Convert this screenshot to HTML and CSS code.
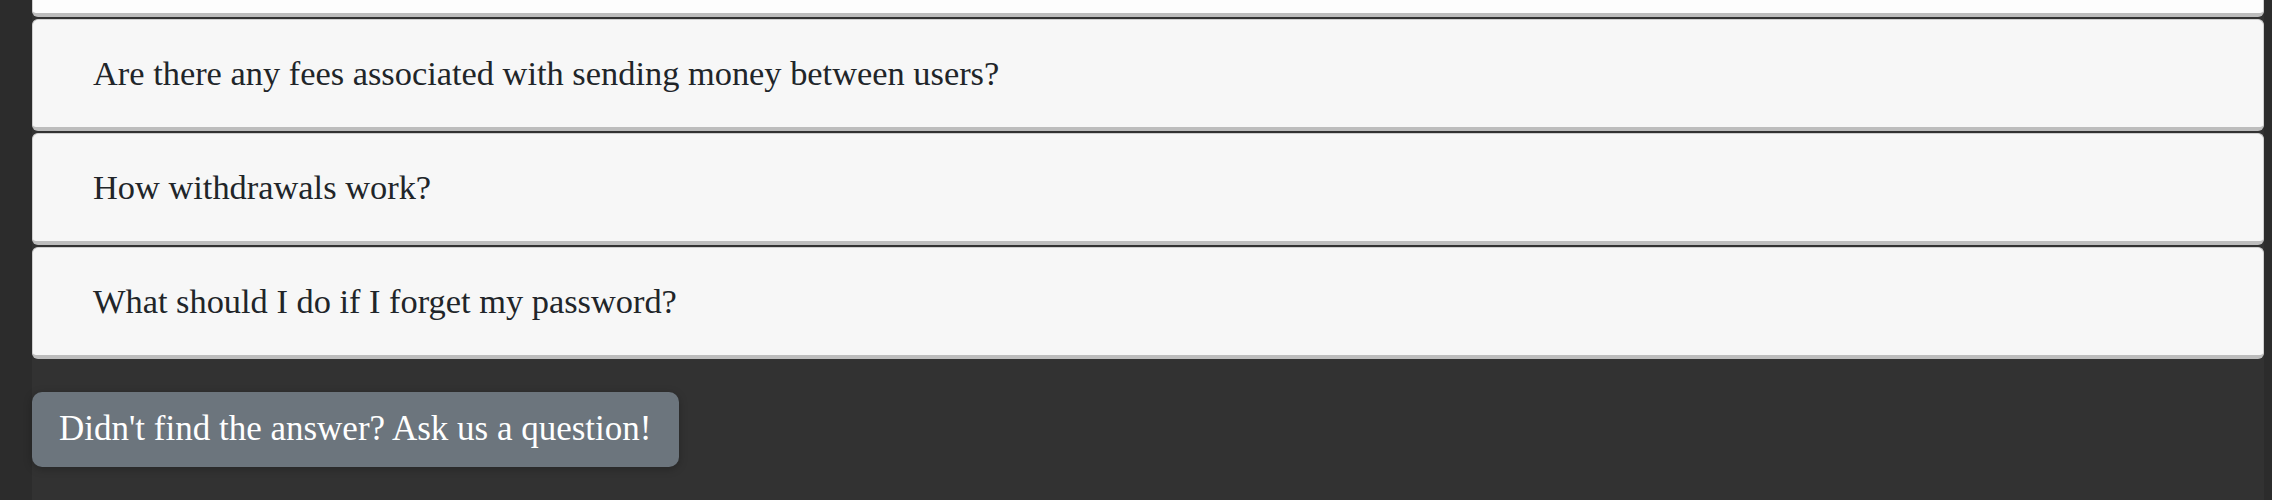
FILE: index.html
```html
<!DOCTYPE html>
<html lang="en">
<head>
<meta charset="utf-8">
<title>FAQ</title>
<link rel="stylesheet" href="styles.css">
</head>
<body>
<main class="page">
  <section class="faq">
    <div class="faq-item faq-item--open" aria-hidden="true"></div>
    <div class="faq-item">Are there any fees associated with sending money between users?</div>
    <div class="faq-item">How withdrawals work?</div>
    <div class="faq-item">What should I do if I forget my password?</div>
  </section>
  <button class="ask-btn" type="button">Didn't find the answer? Ask us a question!</button>
</main>
</body>
</html>
```
FILE: styles.css
```css
html, body {
  margin: 0;
  padding: 0;
}
body {
  background: #2c2c2c;
  font-family: "Liberation Serif", "Times New Roman", serif;
  overflow: hidden;
}
.page {
  margin: 0 8px 0 32px;
  background: #323232;
  min-height: 100vh;
  display: flex;
  flex-direction: column;
  align-items: flex-start;
}
.faq {
  align-self: stretch;
  display: flex;
  flex-direction: column;
  gap: 2px;
  margin-top: -95px;
}
.faq-item {
  background: #f7f7f7;
  color: #212529;
  border: 1px solid #cfcfcf;
  border-bottom: 4px solid #bdbdbd;
  border-radius: 6px;
  padding: 33px 60px 34px;
  font-size: 34.4px;
  line-height: 40px;
  min-height: 40px;
}
.faq-item--open {
  background: #fdfdfd;
}
.ask-btn {
  margin-top: 33px;
  background: #6c757d;
  color: #ffffff;
  border: none;
  border-radius: 10px;
  padding: 17px 28px 18px 27px;
  font-family: "Liberation Serif", "Times New Roman", serif;
  font-size: 35px;
  line-height: 40px;
  box-shadow: 0 2px 8px rgba(0, 0, 0, 0.25);
  cursor: pointer;
}
```
